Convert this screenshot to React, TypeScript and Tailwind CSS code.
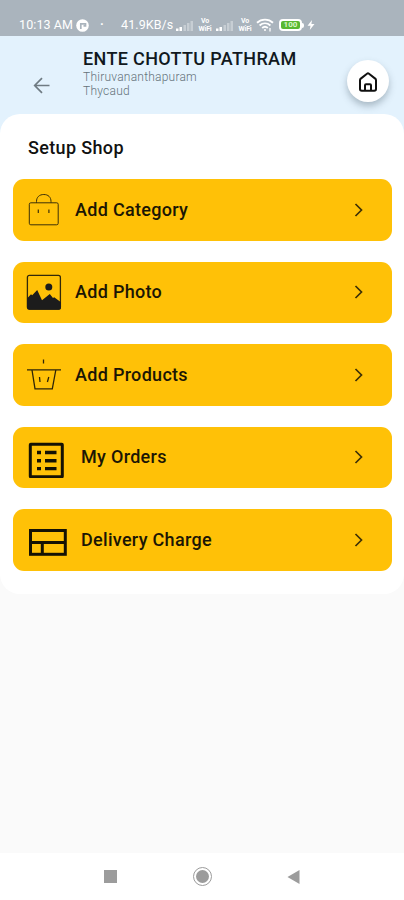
import type { ReactNode } from 'react'

function BagIcon() {
  return (
    <svg width="36" height="36" viewBox="0 0 36 36" fill="none" stroke="#3d3108">
      <rect x="3.3" y="10.8" width="28.9" height="22" rx="1.5" strokeWidth="1" />
      <path d="M10.5 10.8V9.5C10.5 5 13.5 2.5 17.8 2.5s7.2 2.5 7.2 7v1.3" strokeWidth="1" />
      <path d="M12.3 17.500v3.500M22.900 17.500v3.500" strokeWidth="1.200" />
    </svg>
  )
}

function PhotoIcon() {
  return (
    <svg width="36" height="36" viewBox="0 0 36 36">
      <rect x="1.400" y="1.400" width="33" height="33.600" rx="2" fill="none" stroke="#33290a" strokeWidth="1.300" />
      <circle cx="22.800" cy="13" r="3.500" fill="#1c1c1c" />
      <path d="M1 24.500 5 20.300l1.200 1 5-5.300 4.800 10.300 7.800-6.300 3.200 4 1.200-.800 6.800 5v1.300a2 2 0 0 1-2 2H3a2 2 0 0 1-2-2z" fill="#1c1c1c" />
      <path d="M1 30h34v3.700a2 2 0 0 1-2 2H3a2 2 0 0 1-2-2z" fill="#1c1c1c" />
    </svg>
  )
}

function BasketIcon() {
  return (
    <svg width="36" height="36" viewBox="0 0 36 36" fill="none" stroke="#2e2508">
      <path d="M17.500 2.500v4" strokeWidth="1.300" />
      <path d="M1 12.900h34" strokeWidth="1.200" />
      <path d="M6 13l3 18.800h17.300l3.500-18.800" strokeWidth="1.300" />
      <path d="M13.500 20l.5 5M22.800 20l-1.400 5" strokeWidth="1.300" />
    </svg>
  )
}

function OrdersIcon() {
  return (
    <svg width="36" height="36" viewBox="0 0 36 36" fill="none" stroke="#151204">
      <rect x="2.300" y="2.300" width="32" height="32.400" rx="0.500" strokeWidth="3" />
      <path d="M9 10.500h4M9 18.700h4M9 26.600h4M17 10.500h11.500M17 18.700h11.500M17 26.600h11.500" strokeWidth="3.400" />
    </svg>
  )
}

function DeliveryIcon() {
  return (
    <svg width="39" height="28" viewBox="0 0 39 28" fill="none" stroke="#151204" strokeWidth="3">
      <rect x="2.500" y="2.500" width="34.800" height="23.800" />
      <path d="M2.500 14.600h34.800M14.300 14.600v11.700" />
    </svg>
  )
}

function SignalIcon() {
  return (
    <svg width="18" height="12" viewBox="0 0 18 12" fill="#fff">
      <path d="M0 9.500h2.500V12H0zM3.500 8H6v4H3.500z" />
      <path opacity=".35" d="M7.500 6H10v6H7.500zM11 4h2.500v8H11zM14.500 2H17v10h-2.500z" />
    </svg>
  )
}

function VoWifi() {
  return (
    <div className="flex w-4 flex-col items-center text-[7px] leading-[8px] font-bold tracking-[-0.200px]">
      <span>Vo</span>
      <span>WiFi</span>
    </div>
  )
}

function StatusBar() {
  return (
    <div className="flex h-9 items-end bg-[#aab4bd] pb-[3px] pl-[19px] text-white">
      <div className="flex h-4 items-center text-[12.500px]">
        <span className="w-[57px] tracking-[0.100px] whitespace-nowrap">10:13 AM</span>
        <svg width="13" height="13" viewBox="0 0 13 13">
          <circle cx="6.500" cy="6.500" r="6.300" fill="#fff" />
          <path d="M4.800 10V4.800h4.700v2H7.500" fill="none" stroke="#aab4bd" strokeWidth="1.700" />
        </svg>
        <span className="w-[32px] pl-[11px] font-bold">·</span>
        <span className="w-[55px] text-[12.500px] tracking-[0.100px] whitespace-nowrap">41.9KB/s</span>
        <SignalIcon />
        <div className="ml-[3px]"><VoWifi /></div>
        <div className="ml-[3px]"><SignalIcon /></div>
        <div className="ml-[3px]"><VoWifi /></div>
        <svg className="ml-[3px]" width="18" height="14" viewBox="0 0 18 14" fill="none" stroke="#fff" strokeWidth="1.900">
          <path d="M1 4.800C5.500.6 12.500.6 17 4.800M3.600 7.500c3.200-2.900 7.600-2.900 10.800 0M6.200 10c1.700-1.500 3.900-1.500 5.600 0" />
          <circle cx="9" cy="12" r="1" fill="#fff" stroke="none" />
          <path d="M14 10v3.500" strokeWidth="1.300" />
        </svg>
        <div className="ml-[5px] flex h-[12px] w-[23px] items-center justify-center rounded-[4px] border-2 border-white bg-[#58b832] text-[8px] leading-none font-bold text-[#d8f5c8]">
          100
        </div>
        <div className="h-[5px] w-[2px] rounded-r-sm bg-white" />
        <svg className="ml-[3px]" width="8" height="12" viewBox="0 0 8 12" fill="#fff">
          <path d="M5 1 .5 6.700h3L2.800 11l4.700-6H4.400z" />
        </svg>
      </div>
    </div>
  )
}

function Header() {
  return (
    <header className="flex h-[98px] bg-[#e3f2fd]">
      <div className="w-[83px] pt-[41px] pl-[33px]">
        <svg width="18" height="17" viewBox="0 0 18 17" fill="none" stroke="#6f7b83" strokeWidth="1.700">
          <path d="M16.500 8.500H2M9 1.200 1.700 8.500 9 15.800" />
        </svg>
      </div>
      <div className="w-[264px] pt-[12px]">
        <h1 className="text-[18px] leading-[22px] font-medium tracking-[0.350px] whitespace-nowrap text-[#101820]">ENTE CHOTTU PATHRAM</h1>
        <p className="text-[12px] leading-[14px] font-light tracking-[0.230px] text-[#65727b]">Thiruvananthapuram</p>
        <p className="text-[12px] leading-[14px] font-light tracking-[0.230px] text-[#65727b]">Thycaud</p>
      </div>
      <div className="pt-[24px]">
        <div className="flex size-[42px] items-center justify-center rounded-full bg-white pt-[2px] shadow-[0_4px_7px_rgba(60,80,95,0.35)]">
          <svg width="20" height="20" viewBox="0 0 20 20" fill="none" stroke="#101010" strokeWidth="2" strokeLinejoin="round">
            <path d="M2 8.300q0-1 .8-1.700L9 1.700q1-.8 2 0l6.200 4.900q.8.700.8 1.700V17a1.800 1.800 0 0 1-1.800 1.800H3.800A1.800 1.800 0 0 1 2 17z" />
            <path d="M7 18.800v-5.500a1 1 0 0 1 1-1h4a1 1 0 0 1 1 1v5.500" />
          </svg>
        </div>
      </div>
    </header>
  )
}

function MenuRow({ icon, label, wide }: { icon: ReactNode; label: string; wide?: boolean }) {
  return (
    <button className="flex h-[61.500px] w-full items-center rounded-[11px] bg-[#ffc107] text-left">
      <span className={wide ? 'w-[68px] pt-[5px] pl-[15px]' : 'w-[62px] pl-[13px]'}>{icon}</span>
      <span className="flex-1 text-[18px] leading-6 font-medium tracking-[0.300px] text-[#1b1604]">{label}</span>
      <svg className="mr-[29px]" width="9" height="14" viewBox="0 0 9 14" fill="none" stroke="#3d3007" strokeWidth="1.700">
        <path d="M1.500 1 7.500 7l-6 6" />
      </svg>
    </button>
  )
}

function NavBar() {
  return (
    <nav className="flex h-[47px] items-center bg-white pl-[104px]">
      <div className="size-[13px] bg-[#9c9c9c]" />
      <div className="ml-[76px] flex size-[19px] items-center justify-center rounded-full border-[1.500px] border-[#9c9c9c]">
        <div className="size-[13px] rounded-full bg-[#9c9c9c]" />
      </div>
      <svg className="ml-[75px]" width="13" height="14" viewBox="0 0 13 14" fill="#9c9c9c">
        <path d="M12.500 0v14L.5 7z" />
      </svg>
    </nav>
  )
}

export default function App() {
  return (
    <div className="flex h-[900px] w-[404px] flex-col overflow-hidden bg-[#fafafa] font-['Roboto',sans-serif]">
      <StatusBar />
      <Header />
      <main className="-mt-5 flex-1">
        <section className="h-[480px] rounded-[20px] bg-white pr-[12px] pl-[13px]">
          <h2 className="h-[65px] pt-[22px] pl-[15px] text-[18px] leading-6 font-medium tracking-[0.350px] text-[#111]">Setup Shop</h2>
          <div className="flex flex-col gap-[21px]">
            <MenuRow icon={<BagIcon />} label="Add Category" />
            <MenuRow icon={<PhotoIcon />} label="Add Photo" />
            <MenuRow icon={<BasketIcon />} label="Add Products" />
            <MenuRow icon={<OrdersIcon />} label="My Orders" wide />
            <MenuRow icon={<DeliveryIcon />} label="Delivery Charge" wide />
          </div>
        </section>
      </main>
      <NavBar />
    </div>
  )
}
